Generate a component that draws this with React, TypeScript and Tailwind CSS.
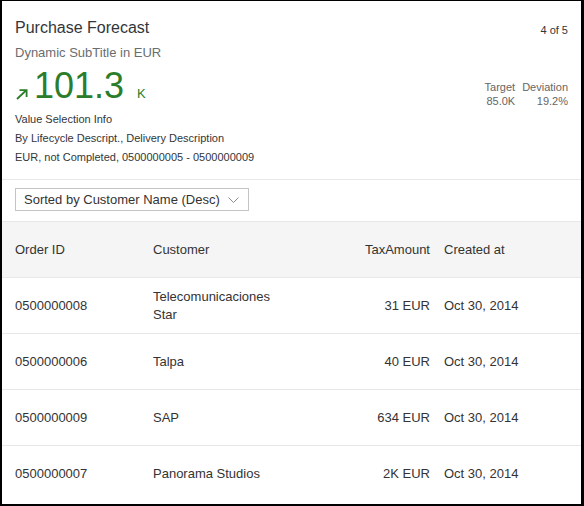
import React from "react";

const rows = [
  { id: "0500000008", customer: "Telecomunicaciones Star", amount: "31 EUR", date: "Oct 30, 2014" },
  { id: "0500000006", customer: "Talpa", amount: "40 EUR", date: "Oct 30, 2014" },
  { id: "0500000009", customer: "SAP", amount: "634 EUR", date: "Oct 30, 2014" },
  { id: "0500000007", customer: "Panorama Studios", amount: "2K EUR", date: "Oct 30, 2014" },
];

export default function App() {
  return (
    <div className="w-[584px] h-[506px] bg-white border-black border-l-2 border-t border-r-[3px] border-b-2 font-['Liberation_Sans',Arial,sans-serif] text-[#333333] overflow-hidden flex flex-col">
      {/* Header */}
      <div className="pl-[13px] pr-[13px] pt-[17px] h-[179px] shrink-0 border-b border-[#e8e8e8] flex flex-col">
        <div className="flex justify-between items-start">
          <div className="text-[16px] leading-[20px] text-[#32363a]">Purchase Forecast</div>
          <div className="text-[11px] leading-[14px] text-[#32363a] mt-[5px]">4 of 5</div>
        </div>
        <div className="text-[13px] leading-[16px] text-[#6a6d70] mt-[7px]">Dynamic SubTitle in EUR</div>
        <div className="flex justify-between items-start mt-[7px] h-[36px]">
          <div className="flex items-baseline text-[#2b7d2b]">
            <svg width="12" height="11" viewBox="0 0 12 11" className="self-end mb-[4px] mr-[6px] ml-[1px]">
              <path d="M1 10 L10 1.5" stroke="#2b7d2b" strokeWidth="1.8" fill="none" />
              <path d="M3.5 1.2 L10.6 1.2 L10.6 8" stroke="#2b7d2b" strokeWidth="1.8" fill="none" />
            </svg>
            <span className="text-[36px] leading-[36px]">101.3</span>
            <span className="text-[13px] leading-[13px] ml-[13px]">K</span>
          </div>
          <div className="flex gap-[7px] text-[11px] leading-[14px] text-[#666666] mt-[12px]">
            <div className="flex flex-col items-end">
              <span>Target</span>
              <span>85.0K</span>
            </div>
            <div className="flex flex-col items-end">
              <span>Deviation</span>
              <span>19.2%</span>
            </div>
          </div>
        </div>
        <div className="text-[11px] leading-[19px] text-[#32363a] mt-[6px]">
          <div>Value Selection Info</div>
          <div>By Lifecycle Descript., Delivery Description</div>
          <div>EUR, not Completed, 0500000005 - 0500000009</div>
        </div>
      </div>

      {/* Select */}
      <div className="pl-[13px] h-[42px] shrink-0 pt-[8px] border-b border-[#e8e8e8]">
        <div className="w-[234px] h-[23px] border border-[#c4c4c4] flex items-center justify-between pl-[8px] pr-[9px] text-[13px] leading-[15px] text-[#333333]">
          <span>Sorted by Customer Name (Desc)</span>
          <svg width="11" height="6" viewBox="0 0 11 6">
            <path d="M0.5 0.5 L5.5 5.5 L10.5 0.5" stroke="#8a8a8a" strokeWidth="1" fill="none" />
          </svg>
        </div>
      </div>

      {/* Table header */}
      <div className="grid grid-cols-[138px_135px_142px_1fr] pl-[13px] h-[56px] shrink-0 items-center bg-[#f5f5f5] border-b border-[#e8e8e8] text-[13px] text-[#333333]">
        <div>Order ID</div>
        <div>Customer</div>
        <div className="text-right">TaxAmount</div>
        <div className="pl-[14px]">Created at</div>
      </div>

      {rows.map((r, i) => (
        <div
          key={r.id}
          className={`grid grid-cols-[138px_135px_142px_1fr] pl-[13px] h-[56px] shrink-0 items-center text-[13px] leading-[18px] text-[#333333] ${i < rows.length - 1 ? "border-b border-[#e8e8e8]" : ""}`}
        >
          <div>{r.id}</div>
          <div>{r.customer}</div>
          <div className="text-right">{r.amount}</div>
          <div className="pl-[14px]">{r.date}</div>
        </div>
      ))}
    </div>
  );
}
